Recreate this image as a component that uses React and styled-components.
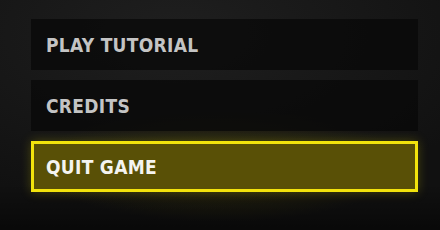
import styled, { createGlobalStyle } from "styled-components";

const Global = createGlobalStyle`
  html, body {
    margin: 0;
    padding: 0;
    background: #141414;
  }
`;

const Screen = styled.div`
  width: 440px;
  height: 230px;
  box-sizing: border-box;
  padding: 19px 22px 0 31px;
  display: flex;
  flex-direction: column;
  gap: 10px;
  overflow: hidden;
  background:
    radial-gradient(ellipse 60% 35% at 50% 72%, rgba(80, 74, 0, 0.4), rgba(0, 0, 0, 0) 70%),
    linear-gradient(to bottom, rgba(0, 0, 0, 0) 80%, rgba(0, 0, 0, 0.5)),
    radial-gradient(ellipse 90% 90% at 40% 15%, #1f1f1f, #111111 85%),
    #121212;
`;

const MenuButton = styled.button`
  width: 387px;
  height: 51px;
  box-sizing: border-box;
  display: flex;
  align-items: center;
  padding: 0 0 0 ${(p) => (p.$active ? "12px" : "15px")};
  margin: 0;
  border: ${(p) => (p.$active ? "3px solid #f2e30c" : "0")};
  background: ${(p) => (p.$active ? "#595006" : "rgba(8, 8, 8, 0.75)")};
  box-shadow: ${(p) => (p.$active ? "0 0 10px rgba(200, 185, 0, 0.3)" : "none")};
  color: ${(p) => (p.$active ? "#f4f4f0" : "#c4c4c4")};
  font-family: "DejaVu Sans Condensed", "DejaVu Sans", sans-serif;
  font-weight: bold;
  font-size: 19px;
  letter-spacing: 0.3px;
  text-align: left;
  cursor: pointer;
`;

const items = ["PLAY TUTORIAL", "CREDITS", "QUIT GAME"];

export default function App() {
  return (
    <>
      <Global />
      <Screen>
        {items.map((label, i) => (
          <MenuButton key={label} $active={i === 2}>
            {label}
          </MenuButton>
        ))}
      </Screen>
    </>
  );
}
